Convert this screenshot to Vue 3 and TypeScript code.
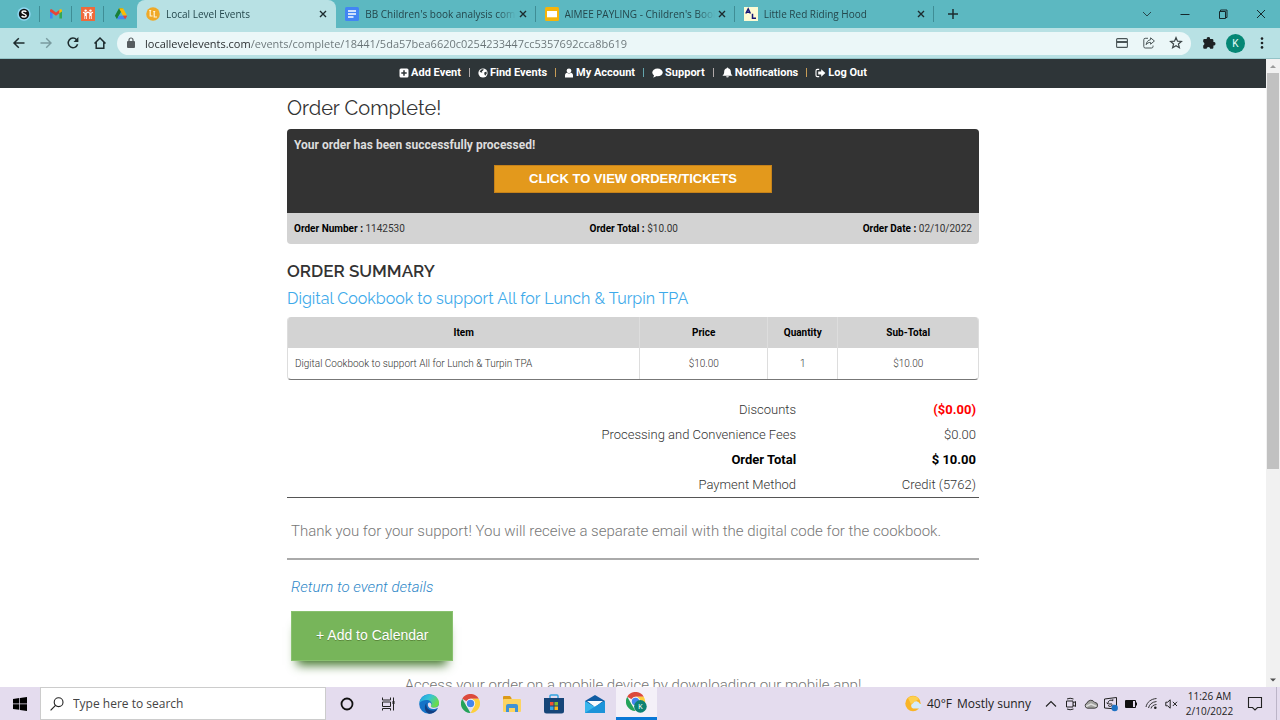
<script setup lang="ts">
import { ref } from 'vue'

interface Tab {
  title: string
  icon: 'local' | 'docs' | 'slides' | 'al'
  active?: boolean
}
interface TotalRow {
  label: string
  value: string
  kind?: 'discount' | 'strong'
}

const tabs: Tab[] = [
  { title: 'Local Level Events', icon: 'local', active: true },
  { title: "BB Children's book analysis comp", icon: 'docs' },
  { title: "AIMEE PAYLING - Children's Book", icon: 'slides' },
  { title: 'Little Red Riding Hood', icon: 'al' },
]
const address = ref('locallevelevents.com/events/complete/18441/5da57bea6620c0254233447cc5357692cca8b619')
const search = ref('')

const items = [
  { name: 'Digital Cookbook to support All for Lunch & Turpin TPA', price: '$10.00', quantity: 1, subtotal: '$10.00' },
]
const totals: TotalRow[] = [
  { label: 'Discounts', value: '($0.00)', kind: 'discount' },
  { label: 'Processing and Convenience Fees', value: '$0.00' },
  { label: 'Order Total', value: '$ 10.00', kind: 'strong' },
  { label: 'Payment Method', value: 'Credit (5762)' },
]
</script>

<template>
  <div class="screen">
    <header class="tabstrip">
      <nav class="pinned" aria-label="Pinned tabs">
        <a href="#" aria-label="S"><svg width="14" height="14" viewBox="0 0 14 14"><circle cx="7" cy="7" r="6.7" fill="#8fd8f2" /><circle cx="7" cy="7" r="5.2" fill="#111" /><path d="M9.2 5C8.4 3.5 5 3.6 5 5.3C5 7 9.2 6.7 9.2 8.7C9.2 10.5 5.5 10.5 4.7 8.9" fill="none" stroke="#fff" stroke-width="1.5" /></svg></a>
        <a href="#" aria-label="Gmail"><svg width="14" height="14" viewBox="0 0 14 14"><path d="M1 3.2V11.6H3.6V6Z" fill="#4285f4" /><path d="M13 3.2V11.6H10.4V6Z" fill="#34a853" /><path d="M1 3.6C1 2.2 2.4 2 3.4 2.7L7 5.5L10.6 2.7V6L7 8.8L1 4.4Z" fill="#ea4335" /><path d="M10.4 2.8C11.6 1.9 13 2.3 13 3.7V4.4L10.4 6.3Z" fill="#fbbc04" /></svg></a>
        <a href="#" aria-label="Family"><svg width="14" height="14" viewBox="0 0 14 14"><rect width="14" height="14" fill="#ef6a3a" /><circle cx="4.6" cy="3.6" r="1.2" fill="#fff" /><circle cx="9.5" cy="3.6" r="1.2" fill="#fff" /><path d="M2 5.2L4.6 6.4L7 5.2L9.5 6.4L12 5.2" fill="none" stroke="#fff" stroke-width="1.2" /><path d="M3.4 6H5.8V12H5V9H4.2V12H3.4ZM8.3 6H10.7V12H9.9V9H9.1V12H8.3Z" fill="#fff" /></svg></a>
        <a href="#" aria-label="Drive"><svg width="14" height="14" viewBox="0 0 14 14"><path d="M5 1.3H9L4.8 8.8L3 12.2L.9 8.7Z" fill="#188038" /><path d="M5 1.3H9L13.2 8.7H9Z" fill="#fbbc04" /><path d="M4.9 8.7H13.2L11.2 12.3H3Z" fill="#4285f4" /><path d="M9 8.7H13.2L11.2 12.3Z" fill="#ea4335" /></svg></a>
      </nav>
      <div class="tabs">
        <div v-for="t in tabs" :key="t.title" class="tab" :class="{ active: t.active }">
          <svg v-if="t.icon === 'local'" class="fav" viewBox="0 0 14 14"><circle cx="7" cy="7" r="6.8" fill="#efa928" /><path d="M4.2 3.5V9H6.6M8.2 4.5V10H11M3.2 3.5H5.2M7.2 4.5H9.2" fill="none" stroke="#fff3d8" stroke-width="1.2" /></svg>
          <svg v-else-if="t.icon === 'docs'" class="fav" viewBox="0 0 14 14"><rect width="14" height="14" rx="1.5" fill="#4285f4" /><path d="M3 4H11M3 7H11M3 10H8.5" stroke="#fff" stroke-width="1.5" /></svg>
          <svg v-else-if="t.icon === 'slides'" class="fav" viewBox="0 0 14 14"><rect width="14" height="14" rx="1.5" fill="#f6b40a" /><rect x="2" y="4" width="10" height="6.3" fill="#fff" /></svg>
          <svg v-else class="fav" viewBox="0 0 14 14"><rect width="14" height="14" fill="#fdfbd3" /><path d="M1.8 6.5L4.2 2L6.4 6.5M2.8 5.2H5.6M8.5 6.8V11.2H12" fill="none" stroke="#171775" stroke-width="1.5" /></svg>
          <span class="tab-title">{{ t.title }}</span>
          <button class="plain" aria-label="Close tab"><svg width="10" height="10" viewBox="0 0 10 10"><path d="M2 2L8 8M8 2L2 8" stroke="#1c2b2e" stroke-width="1.4" /></svg></button>
        </div>
      </div>
      <button class="plain new-tab" aria-label="New tab"><svg width="12" height="12" viewBox="0 0 12 12"><path d="M6 1V11M1 6H11" stroke="#1c2b2e" stroke-width="1.5" /></svg></button>
      <div class="window-buttons">
        <button class="plain" aria-label="Search tabs"><svg width="12" height="12" viewBox="0 0 12 12"><path d="M2 4L6 8L10 4" fill="none" stroke="#27474c" stroke-width="1" /></svg></button>
        <button class="plain" aria-label="Minimize"><svg width="12" height="12" viewBox="0 0 12 12"><path d="M1.5 6.5H10.5" stroke="#16292c" /></svg></button>
        <button class="plain" aria-label="Restore"><svg width="12" height="12" viewBox="0 0 12 12"><path d="M2.5 3.5H8.5V10.5H2.5ZM3.5 3.5V2H10V9.5H8.5" fill="none" stroke="#16292c" /></svg></button>
        <button class="plain" aria-label="Close"><svg width="12" height="12" viewBox="0 0 12 12"><path d="M2 2L10 10M10 2L2 10" stroke="#16292c" /></svg></button>
      </div>
    </header>

    <div class="toolbar">
      <div class="history">
        <button class="plain" aria-label="Back"><svg width="14" height="14" viewBox="0 0 14 14"><path d="M12.5 7H2M6.8 2.2L2 7L6.8 11.8" fill="none" stroke="#1d2b2d" stroke-width="1.5" /></svg></button>
        <button class="plain" aria-label="Forward"><svg width="14" height="14" viewBox="0 0 14 14"><path d="M1.5 7H12M7.2 2.2L12 7L7.2 11.8" fill="none" stroke="#799b9f" stroke-width="1.4" /></svg></button>
        <button class="plain" aria-label="Reload"><svg width="14" height="14" viewBox="0 0 14 14"><path d="M11.6 8.3A4.8 4.8 0 1 1 10.6 3.7" fill="none" stroke="#1d2b2d" stroke-width="1.5" /><path d="M12.4 1V6H7.5Z" fill="#1d2b2d" /></svg></button>
        <button class="plain" aria-label="Home"><svg width="14" height="14" viewBox="0 0 14 14"><path d="M1.5 7.5L7 2L12.5 7.5M3.2 6.2V12.2H10.8V6.2" fill="none" stroke="#1d2b2d" stroke-width="1.5" /></svg></button>
      </div>
      <div class="omnibox">
        <svg width="10" height="12" viewBox="0 0 10 12"><rect x="1" y="4" width="8" height="7" rx="1" fill="#565d60" /><path d="M3 5V3A2 2 0 0 1 7 3V5" fill="none" stroke="#565d60" stroke-width="1.2" /></svg>
        <input v-model="address" class="address" aria-label="Address" spellcheck="false" />
        <button class="plain" aria-label="Payment methods"><svg width="14" height="14" viewBox="0 0 14 14"><rect x="1.6" y="2.6" width="10.8" height="8.8" rx="1" fill="none" stroke="#4a5557" stroke-width="1.1" /><rect x="2" y="5" width="10" height="2" fill="#4a5557" /></svg></button>
        <button class="plain" aria-label="Share"><svg width="14" height="14" viewBox="0 0 14 14"><path d="M6 2.3H3.2A1.4 1.4 0 0 0 1.8 3.7V10.6A1.4 1.4 0 0 0 3.2 12H9.6A1.4 1.4 0 0 0 11 10.6V9.6" fill="none" stroke="#4a5557" /><path d="M8.6 1.8L12.4 5L8.6 8.2V6.4C6.5 6.4 5.2 7.1 4.2 8.7C4.4 6 6 4.1 8.6 3.7Z" fill="none" stroke="#4a5557" /></svg></button>
        <button class="plain" aria-label="Bookmark"><svg width="14" height="14" viewBox="0 0 14 14"><path d="M7 1.6L8.5 5.2L12.4 5.5L9.4 8L10.4 11.8L7 9.8L3.6 11.8L4.6 8L1.6 5.5L5.5 5.2Z" fill="none" stroke="#3d4648" stroke-width="1.2" /></svg></button>
      </div>
      <div class="toolbar-end">
        <button class="plain" aria-label="Extensions"><svg width="14" height="14" viewBox="0 0 14 14"><path d="M1.2 4.2A1.2 1.2 0 0 1 2.4 3H4.8A1.7 1.7 0 1 1 8.1 3H10.2A1.2 1.2 0 0 1 11.4 4.2V6.1A1.7 1.7 0 1 1 11.4 9.4V11.6A1.2 1.2 0 0 1 10.2 12.8H8.2A1.8 1.8 0 0 0 4.6 12.8H2.4A1.2 1.2 0 0 1 1.2 11.6V9.4A1.8 1.8 0 0 0 1.2 6Z" fill="#1d2224" /></svg></button>
        <button class="plain avatar" aria-label="Profile">K</button>
        <button class="plain" aria-label="Menu"><svg width="14" height="14" viewBox="0 0 14 14"><g fill="#1d2224"><circle cx="7" cy="2.6" r="1.3" /><circle cx="7" cy="7" r="1.3" /><circle cx="7" cy="11.4" r="1.3" /></g></svg></button>
      </div>
    </div>

    <div class="viewport">
      <div class="page">
        <nav class="site-nav">
          <a href="#"><svg width="10" height="10" viewBox="0 0 10 10"><rect x=".5" y=".5" width="9" height="9" rx="1.5" fill="#fff" /><path d="M5 2.3V7.7M2.3 5H7.7" stroke="#2f3638" stroke-width="1.5" /></svg>Add Event</a>
          <i></i>
          <a href="#"><svg width="10" height="10" viewBox="0 0 10 10"><circle cx="5" cy="5" r="4.6" fill="#fff" /><path d="M3.4 1.4L5.6 1.1L5.2 2.6L3.8 3.4L4.4 4.6L3 4.4L1.6 3.4ZM6.2 4.4L8.4 3.6L8.8 5.6L7.2 7.8L6.4 6.2Z" fill="#2f3638" /></svg>Find Events</a>
          <i class="warm"></i>
          <a href="#"><svg width="10" height="10" viewBox="0 0 10 10"><circle cx="5" cy="2.8" r="2.4" fill="#fff" /><path d="M1 9.6V7.5C1 5.6 2.2 4.8 3 4.8C4 5.8 6 5.8 7 4.8C7.8 4.8 9 5.6 9 7.5V9.6Z" fill="#fff" /></svg>My Account</a>
          <i class="cool"></i>
          <a href="#"><svg width="11" height="10" viewBox="0 0 11 10"><ellipse cx="5.5" cy="4.4" rx="5.2" ry="3.9" fill="#fff" /><path d="M2 6.5C2.2 8 1.6 8.8.9 9.5C2.8 9.4 4 8.6 4.8 7.6Z" fill="#fff" /></svg>Support</a>
          <i></i>
          <a href="#"><svg width="11" height="11" viewBox="0 0 11 11"><path d="M5.5.4C6 .4 6.3.8 6.2 1.2C8 1.6 8.8 3 8.8 4.5C8.8 6.6 9.4 7.7 10.6 8.7H.4C1.6 7.7 2.2 6.6 2.2 4.5C2.2 3 3 1.6 4.8 1.2C4.7.8 5 .4 5.5.4ZM4.2 9.2H6.8C6.7 10.8 4.3 10.8 4.2 9.2Z" fill="#fff" /></svg>Notifications</a>
          <i class="warm"></i>
          <a href="#"><svg width="11" height="10" viewBox="0 0 11 10"><path d="M4.2 1.4H2.4C1.4 1.4 1 2 1 2.7V7.3C1 8 1.4 8.6 2.4 8.6H4.2" fill="none" stroke="#fff" stroke-width="1.1" /><path d="M6.2 1.3L10.4 5L6.2 8.7V6.5H3.2V3.5H6.2Z" fill="#fff" /></svg>Log Out</a>
        </nav>

        <main class="order">
          <h1>Order Complete!</h1>
          <section class="notice">
            <div class="notice-top">
              <p>Your order has been successfully processed!</p>
              <button class="view-order">CLICK TO VIEW ORDER/TICKETS</button>
            </div>
            <div class="notice-facts">
              <span><b>Order Number :</b> 1142530</span>
              <span><b>Order Total :</b> $10.00</span>
              <span><b>Order Date :</b> 02/10/2022</span>
            </div>
          </section>

          <h2>ORDER SUMMARY</h2>
          <a class="event-name" href="#">Digital Cookbook to support All for Lunch &amp; Turpin TPA</a>

          <div class="items-frame">
            <table class="items">
              <thead>
                <tr><th class="c-item">Item</th><th class="c-price">Price</th><th class="c-qty">Quantity</th><th>Sub-Total</th></tr>
              </thead>
              <tbody>
                <tr v-for="row in items" :key="row.name">
                  <td class="name">{{ row.name }}</td><td>{{ row.price }}</td><td>{{ row.quantity }}</td><td>{{ row.subtotal }}</td>
                </tr>
              </tbody>
            </table>
          </div>

          <table class="totals">
            <tbody>
              <tr v-for="row in totals" :key="row.label" :class="row.kind">
                <th scope="row">{{ row.label }}</th>
                <td>{{ row.value }}</td>
              </tr>
            </tbody>
          </table>

          <p class="thanks">Thank you for your support! You will receive a separate email with the digital code for the cookbook.</p>
          <a class="return" href="#">Return to event details</a>
          <button class="calendar">+ Add to Calendar</button>
          <p class="mobile">Access your order on a mobile device by downloading our mobile app!</p>
        </main>
      </div>
      <div class="scrollbar">
        <svg width="14" height="14" viewBox="0 0 14 14"><path d="M4 9L7 6L10 9Z" fill="#9b9b9b" /></svg>
        <div class="track"><div class="thumb"></div></div>
        <svg width="14" height="14" viewBox="0 0 14 14"><path d="M4 5.5L7 8.5L10 5.5Z" fill="#505050" /></svg>
      </div>
    </div>

    <footer class="taskbar">
      <button class="plain start" aria-label="Start"><svg width="14" height="14" viewBox="0 0 14 14"><path d="M0 2L6.3 1.1V6.6H0ZM7 1L14 0V6.6H7ZM0 7.3H6.3V12.8L0 12ZM7 7.3H14V14L7 13Z" fill="#000" /></svg></button>
      <label class="search">
        <svg width="14" height="14" viewBox="0 0 14 14"><circle cx="8.6" cy="5.2" r="4.4" fill="none" stroke="#222" stroke-width="1.1" /><path d="M5.5 8.4L.6 13.3" stroke="#222" stroke-width="1.2" /></svg>
        <input v-model="search" placeholder="Type here to search" aria-label="Search" />
      </label>
      <nav class="apps">
        <button class="plain" aria-label="Cortana"><svg width="14" height="14" viewBox="0 0 14 14"><circle cx="7" cy="7" r="5.5" fill="none" stroke="#111" stroke-width="1.8" /></svg></button>
        <button class="plain" aria-label="Task view"><svg width="15" height="14" viewBox="0 0 15 14"><path d="M1.5 .5V3H9.5V.5M1.5 5H9.5V9.5H1.5ZM1.5 13.5V11.5H9.5V13.5M12.5 .5V13.5" fill="none" stroke="#222" /><rect x="11.5" y="4" width="2" height="3" fill="#222" /></svg></button>
        <button class="plain" aria-label="Edge"><svg width="20" height="20" viewBox="0 0 20 20"><defs><linearGradient id="eg" x1="0" y1="0" x2="1" y2=".5"><stop offset="0" stop-color="#1d9be0" /><stop offset=".5" stop-color="#35c3d8" /><stop offset="1" stop-color="#6bdc48" /></linearGradient></defs><circle cx="10" cy="10" r="9.8" fill="#1473c8" /><path d="M.3 9.2C1 4 5.2.2 10.2.2C16 .2 20 4.3 20 8.7C20 12 17.5 13.7 15 13.7C12.4 13.7 11.2 12.7 12.2 11.2C13.8 8.6 11 5.9 7.6 6C4.2 6 1.3 7.6.3 9.2Z" fill="url(#eg)" /><path d="M7.7 8.8C6.4 11.6 8.2 16.2 13.2 16.6C15.4 16.8 17.3 16 18.6 14.8C16.8 18 13.5 19.8 10.3 19.8C5.7 18.8 4.5 12 7.7 8.8Z" fill="#123f83" /><path d="M9.3 9C8.5 10.2 8.6 12.4 10.6 14C13.2 15.6 16.5 15 18.9 13.7L19 14.5L20 14V11.5C18.5 13.2 16.6 13.7 15 13.7C12.4 13.7 11.2 12.7 12.2 11.2C12.9 10 11 7.3 9.3 9Z" fill="#e4dcee" /></svg></button>
        <button class="plain" aria-label="Chrome"><svg width="19" height="19" viewBox="0 0 20 20"><path d="M10 10L1.3 5A10 10 0 0 1 18.7 5L10 5Z" fill="#dc4a3c" /><path d="M1.3 5L5.7 12.5L10 20A10 10 0 0 1 1.3 5Z" fill="#25a35a" /><path d="M18.7 5A10 10 0 0 1 10 20L14.3 12.5L10 5Z" fill="#fdcf3c" /><circle cx="10" cy="10" r="4.9" fill="#f5f5f5" /><circle cx="10" cy="10" r="3.9" fill="#4686ee" /></svg></button>
        <button class="plain" aria-label="File Explorer"><svg width="20" height="18" viewBox="0 0 20 18"><path d="M1 2A1 1 0 0 1 2 1H8L9.5 3V8H1Z" fill="#dc9a18" /><rect x="1" y="4" width="18" height="13" rx="1" fill="#fcd462" /><path d="M4 17V11A2 2 0 0 1 6 9H14A2 2 0 0 1 16 11V17H13V13H7V17Z" fill="#3f92d6" /></svg></button>
        <button class="plain" aria-label="Store"><svg width="20" height="20" viewBox="0 0 20 20"><path d="M6 5V2A1 1 0 0 1 7 1H13A1 1 0 0 1 14 2V5" fill="none" stroke="#30a3e0" stroke-width="1.4" /><path d="M0 4H20V17A2.5 2.5 0 0 1 17.5 19.5H2.5A2.5 2.5 0 0 1 0 17Z" fill="#164578" /><rect x="6" y="8" width="3.5" height="3.5" fill="#ee5135" /><rect x="10.5" y="8" width="3.5" height="3.5" fill="#80bd2e" /><rect x="6" y="12.5" width="3.5" height="3.5" fill="#35a7e6" /><rect x="10.5" y="12.5" width="3.5" height="3.5" fill="#fdb817" /></svg></button>
        <button class="plain" aria-label="Mail"><svg width="20" height="20" viewBox="0 0 20 20"><path d="M0 7L10 1L20 7V12H0Z" fill="#0f5ba2" /><path d="M2 7H18L10 13Z" fill="#f7fafc" /><path d="M0 7L10 13L20 7V19H0Z" fill="#37b5ec" /><path d="M0 19L10 12.5L20 7V19Z" fill="#1c93d9" /></svg></button>
        <button class="plain current" aria-label="Chrome, Local Level Events"><svg width="21" height="21" viewBox="0 0 21 21"><g transform="scale(.95)"><path d="M10 10L1.3 5A10 10 0 0 1 18.7 5L10 5Z" fill="#dc4a3c" /><path d="M1.3 5L5.7 12.5L10 20A10 10 0 0 1 1.3 5Z" fill="#25a35a" /><path d="M18.7 5A10 10 0 0 1 10 20L14.3 12.5L10 5Z" fill="#fdcf3c" /><circle cx="10" cy="10" r="4.9" fill="#f5f5f5" /><circle cx="10" cy="10" r="3.9" fill="#4686ee" /></g><circle cx="14.4" cy="14.4" r="6.3" fill="#0d8273" /><text x="14.4" y="17" text-anchor="middle" font-family="Roboto, sans-serif" font-size="7" fill="#fff">K</text></svg></button>
      </nav>
      <div class="tray">
        <button class="plain weather"><svg width="17" height="17" viewBox="0 0 17 17"><circle cx="8" cy="8.5" r="7.7" fill="#f9b427" /><path d="M3 3A7.7 7.7 0 0 1 14 4L6 9Z" fill="#fdd04f" /><path d="M8 13.5A2.8 2.8 0 0 1 8 8.2A3.7 3.7 0 0 1 14.6 8.6A2.5 2.5 0 0 1 14.5 13.5Z" fill="#d5ecfb" /></svg><span>40°F</span><span>Mostly sunny</span></button>
        <button class="plain slot" aria-label="Show hidden icons"><svg width="12" height="12" viewBox="0 0 12 12"><path d="M1 8.5L6 3.5L11 8.5" fill="none" stroke="#222" stroke-width="1.1" /></svg></button>
        <button class="plain slot" aria-label="Meet now"><svg width="12" height="14" viewBox="0 0 12 14"><path d="M1.5 4H8V10H1.5ZM8 6L10.5 4.5V9.5L8 8M2 2Q5 .5 8.5 2M2 12Q5 13.5 8.5 12" fill="none" stroke="#222" /></svg></button>
        <button class="plain slot" aria-label="OneDrive"><svg width="14" height="12" viewBox="0 0 14 12"><path d="M3.4 10.2A2.7 2.7 0 0 1 3 5A4.2 4.2 0 0 1 10.6 4.4A2.9 2.9 0 0 1 10.8 10.2Z" fill="#a3a3a0" stroke="#333" stroke-width=".9" /><path d="M2 8.5L7 6L12.5 8.5" fill="none" stroke="#ddd" stroke-width="1.4" /></svg></button>
        <button class="plain slot" aria-label="Sync"><svg width="16" height="16" viewBox="0 0 16 16"><path d="M1.5 3L13.5 1.5V13L1.5 12Z" fill="none" stroke="#222" /><path d="M9.8 4.8C7.5 3.2 4.5 5 5 8M5 8L3.5 6.8M5 9.3C6 11 8.8 10.7 9.8 8.5M9.8 4.8V3.2M5.5 8H9" fill="none" stroke="#222" /><circle cx="11.7" cy="12" r="3.2" fill="#1e72c4" /></svg></button>
        <button class="plain slot" aria-label="Battery"><svg width="14" height="10" viewBox="0 0 14 10"><path d="M1.5 1.5H11.5V8.5H1.5ZM12.5 3.5V6.5" fill="none" stroke="#111" /><rect x="2" y="2" width="7" height="6" fill="#111" /></svg></button>
        <button class="plain slot" aria-label="Wi-Fi"><svg width="13" height="13" viewBox="0 0 13 13"><g fill="none" stroke="#333"><path d="M1 10C2 5 6 2 11.5 1.5M3.5 11C4.2 7.5 7 5 11.5 4.5M6 11.5C6.5 9.3 8.3 7.8 11.5 7.5" /></g><circle cx="10.3" cy="10.8" r="1.3" fill="#222" /></svg></button>
        <button class="plain slot" aria-label="Sound muted"><svg width="13" height="12" viewBox="0 0 13 12"><path d="M.8 4.2H2.6L5.2 1.8V10.2L2.6 7.8H.8ZM7.8 3.8L12 8M12 3.8L7.8 8" fill="none" stroke="#222" /></svg></button>
        <div class="clock"><time>11:26 AM</time><time>2/10/2022</time></div>
        <button class="plain notifications" aria-label="Notifications"><svg width="16" height="15" viewBox="0 0 16 15"><path d="M1.5 1.5H14.5V11.5H10.5L8 14L5.5 11.5H1.5Z" fill="none" stroke="#222" stroke-width="1.1" /></svg></button>
      </div>
    </footer>
  </div>
</template>

<style>
body {
  overflow: hidden;
}
</style>

<style scoped>
.screen {
  display: flex;
  flex-direction: column;
  height: 100vh;
  overflow: hidden;
  background: #fff;
  font-family: "Open Sans", "Noto Sans", sans-serif;
  color: #333;
}
.screen * {
  box-sizing: border-box;
}
svg {
  display: block;
  flex: none;
}
h1, h2, p {
  margin: 0;
}
a {
  text-decoration: none;
}
.plain {
  display: flex;
  align-items: center;
  justify-content: center;
  padding: 0;
  border: 0;
  background: none;
  font: inherit;
  color: inherit;
}

.tabstrip {
  display: flex;
  align-items: center;
  flex: 0 0 28px;
  background: #5cb8c1;
}
.pinned {
  display: flex;
  padding-left: 8px;
}
.pinned a {
  display: flex;
  align-items: center;
  justify-content: center;
  width: 32px;
  height: 16px;
  border-right: 1px solid #3f8d95;
}
.pinned a:last-child {
  width: 33px;
  border-right: 0;
}
.tabs {
  display: flex;
  flex: 0 1 797px;
  align-self: stretch;
  min-width: 0;
}
.tab {
  display: flex;
  flex: 1;
  align-items: center;
  gap: 6px;
  min-width: 0;
  padding: 0 8px 0 9px;
  color: #24474c;
  font-size: 10px;
  background: linear-gradient(#3f8d95, #3f8d95) right center / 1px 16px no-repeat;
}
.tab.active {
  border-radius: 8px 8px 0 0;
  background: #b8e1e4;
}
.tab button {
  margin-left: -4px;
}
.fav {
  width: 14px;
  height: 14px;
}
.tab-title {
  flex: 1;
  overflow: hidden;
  white-space: nowrap;
  mask-image: linear-gradient(to right, #000 88%, transparent);
}
.new-tab {
  width: 38px;
  height: 28px;
}
.window-buttons {
  display: flex;
  margin-left: auto;
}
.window-buttons button {
  width: 38px;
  height: 24px;
}

.toolbar {
  display: flex;
  align-items: center;
  flex: 0 0 31px;
  padding-left: 5px;
  background: #b8e1e4;
  border-bottom: 1px solid #94c3c7;
}
.history {
  display: flex;
  margin-right: 4px;
}
.history button {
  width: 27px;
  height: 24px;
}
.omnibox {
  display: flex;
  align-items: center;
  flex: 1;
  height: 23px;
  padding: 0 2px 0 9px;
  border-radius: 12px;
  background: #ebf7f8;
}
.omnibox button {
  width: 27px;
  height: 23px;
}
.address {
  flex: 1;
  min-width: 0;
  margin-left: 9px;
  padding: 0;
  border: 0;
  outline: 0;
  font: 11px "Open Sans", "Noto Sans", sans-serif;
  color: transparent;
  background: linear-gradient(to right, #25292b 106px, #687376 106px);
  background-clip: text;
}
.toolbar-end {
  display: flex;
  align-items: center;
  gap: 10px;
  padding: 0 11px;
}
.avatar {
  width: 19px;
  height: 19px;
  border-radius: 50%;
  background: #058775;
  color: #e8fffb;
  font: 10px Roboto, sans-serif;
}

.viewport {
  display: flex;
  flex: 1;
  min-height: 0;
}
.page {
  flex: 1;
  min-width: 0;
  overflow: hidden;
  font-family: Roboto, sans-serif;
  font-weight: 300;
}
.site-nav {
  display: flex;
  align-items: center;
  justify-content: center;
  gap: 8px;
  height: 29px;
  padding-bottom: 2px;
  background: #2e3538;
}
.site-nav a {
  display: flex;
  align-items: center;
  gap: 2px;
  color: #fff;
  font-size: 11px;
  font-weight: 700;
}
.site-nav i {
  width: 1px;
  height: 9px;
  background: #b0a9a9;
}
.site-nav .warm {
  background: #c79c56;
}
.site-nav .cool {
  background: #63a4ac;
}

.order {
  display: flex;
  flex-direction: column;
  max-width: 692px;
  margin: 0 auto;
  padding-top: 8px;
}
h1, h2, .event-name {
  font-family: Raleway, Lato, sans-serif;
}
h1 {
  margin-bottom: 9px;
  font-size: 20px;
  font-weight: 400;
  line-height: 24px;
}
.notice {
  border-radius: 4px;
  overflow: hidden;
  background: #d3d3d3;
}
.notice-top {
  display: flex;
  flex-direction: column;
  gap: 12px;
  padding: 8px 7px 20px;
  background: #333;
  color: #ddd;
}
.notice-top p {
  font-size: 12px;
  font-weight: 700;
  line-height: 16px;
}
.view-order {
  align-self: center;
  height: 28px;
  padding: 0 34px 2px;
  border: 1px solid #c6821a;
  background: #e3991c;
  color: #fff;
  font: bold 13px "Liberation Sans", Arial, sans-serif;
}
.notice-facts {
  display: flex;
  justify-content: space-between;
  padding: 0 7px;
  font-size: 10px;
  line-height: 31px;
  font-weight: 400;
}
.notice-facts b {
  color: #000;
  font-weight: 700;
}
h2 {
  margin-top: 17px;
  font-size: 17px;
  font-weight: 600;
  line-height: 20px;
}
.event-name {
  margin: 6px 0;
  color: #3eaaea;
  font-size: 16px;
  font-weight: 400;
  line-height: 24px;
}
.items-frame {
  border: solid #ddd;
  border-width: 0 1px;
  border-bottom: 1px solid #777;
  border-radius: 4px;
  overflow: hidden;
}
.items {
  width: 100%;
  table-layout: fixed;
  border-collapse: collapse;
  font-size: 10px;
  line-height: 31px;
  text-align: center;
}
.items th, .items td {
  padding: 0;
}
.items th {
  background: #d3d3d3;
  color: #000;
  font-weight: 700;
}
.items th + th, .items td + td {
  border-left: 1px solid #ddd;
}
.items .name {
  padding-left: 7px;
  text-align: left;
}
.c-item {
  width: 51%;
}
.c-price {
  width: 18.5%;
}
.c-qty {
  width: 10.2%;
}
.totals {
  margin-top: 17px;
  border-collapse: collapse;
  border-bottom: 1px solid #555;
  font-size: 13px;
  line-height: 25px;
  text-align: right;
}
.totals th {
  width: 74%;
  padding: 0 3px 0 0;
  font-weight: 300;
}
.totals td {
  padding: 0 3px 0 0;
}
.totals .strong, .totals .strong th {
  color: #000;
  font-weight: 700;
}
.discount td {
  color: #f00;
  font-weight: 700;
}
.thanks {
  padding: 23px 4px 17px;
  border-bottom: 2px solid #aaa;
  color: #777;
  font-size: 15px;
  line-height: 20px;
}
.return {
  align-self: flex-start;
  margin: 17px 4px 14px;
  color: #2e87c8;
  font-size: 15px;
  font-style: italic;
  line-height: 20px;
}
.calendar {
  align-self: flex-start;
  height: 50px;
  margin-left: 4px;
  padding: 0 24px 2px;
  border: 1px solid #89c16f;
  background: #77b55a;
  box-shadow: 0 10px 10px -6px #3e7327;
  color: #fff;
  font: 14px "Liberation Sans", Arial, sans-serif;
  text-shadow: 0 1px 0 #5b8a3c;
}
.mobile {
  margin-top: 14px;
  color: #777;
  font-size: 15px;
  line-height: 20px;
  text-align: center;
}

.scrollbar {
  display: flex;
  flex-direction: column;
  flex: 0 0 14px;
  background: #f1f1f1;
}
.track {
  flex: 1;
  padding: 0 1px;
}
.thumb {
  height: 66%;
  background: #c1c1c1;
}

.taskbar {
  display: flex;
  flex: 0 0 33px;
  background: #e4dcee;
  color: #222;
}
.start {
  width: 40px;
}
.search {
  display: flex;
  align-items: center;
  flex: 0 1 286px;
  gap: 9px;
  padding: 0 9px;
  border: 1px solid #ccc;
  background: #fff;
}
.search input {
  flex: 1;
  min-width: 0;
  padding: 0;
  border: 0;
  outline: 0;
  background: none;
  font: 12px "Open Sans", "Noto Sans", sans-serif;
}
.search input::placeholder {
  color: #444;
}
.apps {
  display: flex;
  flex: 0 1 331px;
}
.apps button {
  flex: 1;
}
.apps .current {
  background: #f4f0f8;
  border-bottom: 3px solid #0a78d6;
}
.tray {
  display: flex;
  align-items: center;
  margin-left: auto;
  margin-right: 3px;
  padding-right: 5px;
  border-right: 1px solid #bcb5c8;
}
.weather {
  gap: 5px;
  margin-right: 10px;
  font-size: 12px;
}
.slot {
  width: 20px;
}
.clock {
  display: flex;
  flex-direction: column;
  align-items: center;
  width: 57px;
  font-size: 10px;
  line-height: 15px;
}
.notifications {
  width: 33px;
}
</style>
